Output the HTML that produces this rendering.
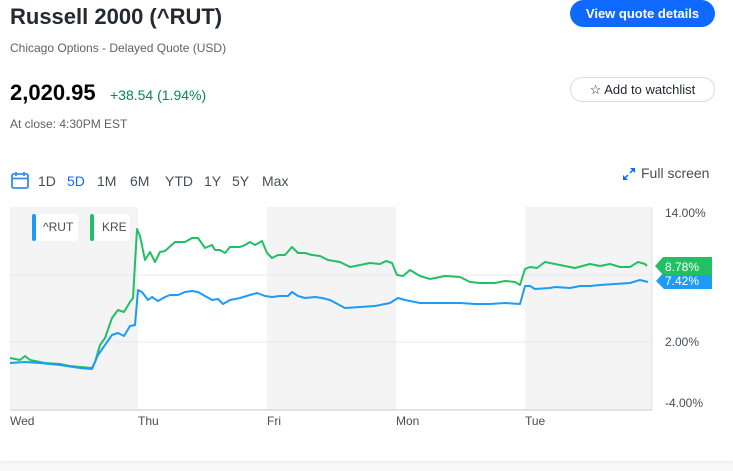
<!DOCTYPE html>
<html><head><meta charset="utf-8"><style>
body{margin:0;width:733px;height:471px;background:#f8f8f9;font-family:"Liberation Sans",sans-serif;overflow:hidden;position:relative}
.card{position:absolute;left:0;top:0;width:733px;height:461px;background:#fff;box-shadow:0 1px 3px rgba(0,0,0,.08)}
.t{position:absolute;white-space:nowrap}
</style></head><body><div class="card">
<div class="t" style="left:10px;top:4px;font-size:22px;font-weight:bold;color:#232a31">Russell 2000 (^RUT)</div>
<div class="t" style="left:10px;top:41px;font-size:12px;color:#5b636a">Chicago Options - Delayed Quote (USD)</div>
<div class="t" style="left:10px;top:80px;font-size:22px;font-weight:bold;color:#000">2,020.95</div>
<div class="t" style="left:110px;top:87px;font-size:14px;color:#008a4b">+38.54 (1.94%)</div>
<div class="t" style="left:10px;top:117px;font-size:12px;color:#5b636a">At close: 4:30PM EST</div>
<div class="t" style="left:570px;top:0;width:145px;height:27px;border-radius:14px;background:#0f69ff;color:#fff;font-size:13px;font-weight:bold;text-align:center;line-height:27px">View quote details</div>
<div class="t" style="left:570px;top:77px;width:142px;height:23px;border-radius:12px;border:1px solid #dadce0;color:#232a31;font-size:13px;line-height:23px;text-align:center;box-sizing:border-box;width:145px;height:25px">☆ Add to watchlist</div>
<svg class="t" style="left:10px;top:171px" width="20" height="19" viewBox="0 0 20 19"><rect x="2" y="3" width="16" height="14" rx="1.5" fill="none" stroke="#3b8cf2" stroke-width="1.8"/><line x1="2" y1="7.5" x2="18" y2="7.5" stroke="#3b8cf2" stroke-width="1.8"/><line x1="6" y1="1" x2="6" y2="5" stroke="#3b8cf2" stroke-width="1.8"/><line x1="14" y1="1" x2="14" y2="5" stroke="#3b8cf2" stroke-width="1.8"/></svg>
<div class="t" style="left:38px;top:173px;font-size:14px;color:#464e56;word-spacing:0">1D</div>
<div class="t" style="left:67px;top:173px;font-size:14px;color:#0f69ff">5D</div>
<div class="t" style="left:97px;top:173px;font-size:14px;color:#464e56">1M</div>
<div class="t" style="left:130px;top:173px;font-size:14px;color:#464e56">6M</div>
<div class="t" style="left:165px;top:173px;font-size:14px;color:#464e56">YTD</div>
<div class="t" style="left:204px;top:173px;font-size:14px;color:#464e56">1Y</div>
<div class="t" style="left:232px;top:173px;font-size:14px;color:#464e56">5Y</div>
<div class="t" style="left:262px;top:173px;font-size:14px;color:#464e56">Max</div>
<svg class="t" style="left:622px;top:167px" width="14" height="14" viewBox="0 0 14 14" fill="#0f69ff"><path d="M8 1h5v5l-2-2-2.5 2.5-1-1L10 3z"/><path d="M6 13H1V8l2 2 2.5-2.5 1 1L4 11z"/></svg>
<div class="t" style="left:641px;top:165px;font-size:14px;color:#464e56">Full screen</div>
<svg class="t" style="left:0;top:200px" width="733" height="230">
<rect x="10" y="7" width="128" height="203" fill="#f4f4f4"/>
<rect x="267" y="7" width="129" height="203" fill="#f4f4f4"/>
<rect x="525" y="7" width="127" height="203" fill="#f4f4f4"/>
<line x1="10" y1="75" x2="652" y2="75" stroke="#e8e8e8"/>
<line x1="10" y1="142" x2="652" y2="142" stroke="#e8e8e8"/>
<line x1="652" y1="7" x2="652" y2="210" stroke="#e0e0e6"/>
<line x1="10" y1="210" x2="652" y2="210" stroke="#d8d8e0" stroke-width="1.5"/>
<polyline fill="none" stroke="#21c064" stroke-width="2" stroke-linejoin="round" transform="translate(0,-200)" points="10,358 20,360 25,356 30,360 45,363 60,364 70,366 80,367 92,368 95,362 100,345 105,338 112,318 118,310 124,312 130,302 133,298 137,229 140,236 145,260 150,252 155,262 160,252 165,251 175,242 185,242 192,238 198,238 205,248 212,245 215,250 220,250 225,253 230,247 240,247 245,245 250,242 255,245 262,241 267,253 272,258 278,255 285,255 292,247 298,253 305,253 312,255 320,256 328,260 340,262 350,267 360,265 370,263 380,264 386,261 392,263 397,275 403,276 410,270 420,276 430,279 445,276 460,277 470,282 480,283 495,283 505,281 515,282 520,285 525,269 530,267 537,268 545,262 555,264 565,266 575,268 590,264 600,266 610,264 620,267 630,267 638,262 645,264 647,266"/>
<polyline fill="none" stroke="#1d9bf5" stroke-width="2" stroke-linejoin="round" transform="translate(0,-200)" points="10,363 25,362 40,363 60,365 80,368 92,369 98,355 105,345 112,335 118,333 124,336 130,326 135,325 138,290 142,292 148,300 152,297 158,301 165,297 170,295 178,295 185,292 192,291 198,292 205,296 212,300 218,299 223,304 230,300 240,298 250,295 257,293 265,296 272,297 280,296 288,296 292,292 298,296 305,298 315,297 322,298 330,300 345,308 360,307 375,306 390,303 398,298 405,300 420,303 440,303 460,303 475,304 490,304 505,303 520,304 525,286 530,286 535,289 550,288 555,287 570,288 580,286 590,286 600,285 615,284 630,283 640,280 648,282"/>
<rect x="32" y="14" width="46" height="27" rx="3" fill="#fff"/><rect x="32" y="14" width="4" height="27" rx="2" fill="#1d9bf5"/>
<text x="43" y="31" font-size="12" fill="#464e56" font-family="Liberation Sans">^RUT</text>
<rect x="90" y="14" width="40" height="27" rx="3" fill="#fff"/><rect x="90" y="14" width="4" height="27" rx="2" fill="#21c064"/>
<text x="102" y="31" font-size="12" fill="#464e56" font-family="Liberation Sans">KRE</text>
<path d="M656,81 L664,72 L712,72 L712,89 L664,89 Z" fill="#1d9bf5"/>
<text x="665" y="85" font-size="12" fill="#fff" font-family="Liberation Sans">7.42%</text>
<path d="M655,66 L663,57 L712,57 L712,75 L663,75 Z" fill="#21c064"/>
<text x="665" y="71" font-size="12" fill="#fff" font-family="Liberation Sans">8.78%</text>
<g font-size="12" fill="#464e56" font-family="Liberation Sans">
<text x="665" y="17">14.00%</text><text x="665" y="146">2.00%</text><text x="665" y="207">-4.00%</text>
<text x="10" y="225">Wed</text><text x="138" y="225">Thu</text><text x="267" y="225">Fri</text><text x="396" y="225">Mon</text><text x="525" y="225">Tue</text>
</g></svg>
</div></body></html>
